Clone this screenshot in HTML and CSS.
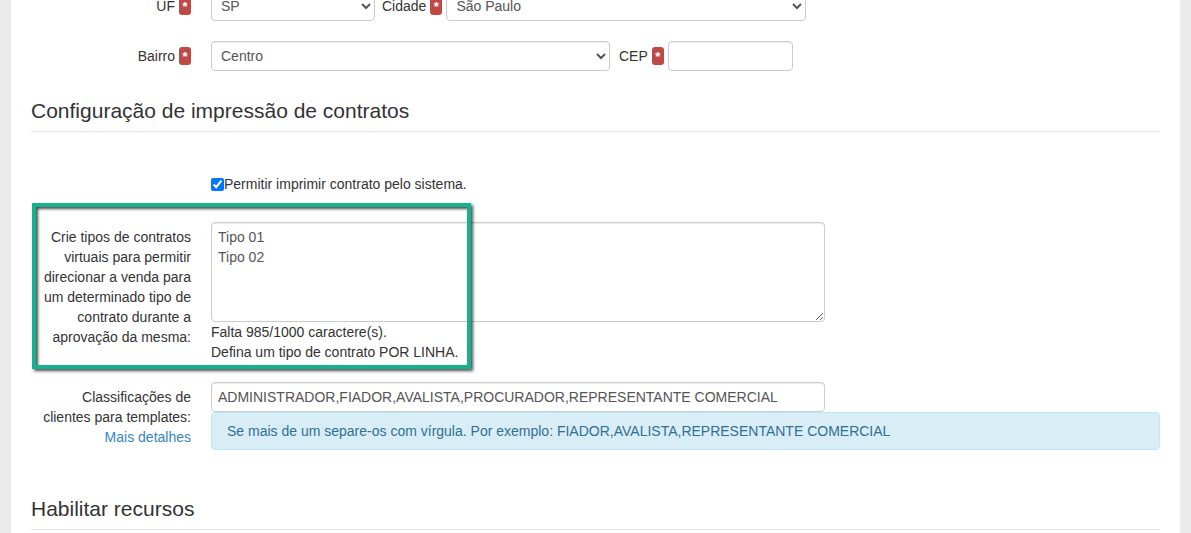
FILE: index.html
```html
<!DOCTYPE html>
<html lang="pt-BR">
<head>
    <meta charset="UTF-8">
    <meta name="viewport" content="width=device-width, initial-scale=1.0">
    <title>Configurações da empresa</title>
    <link rel="stylesheet" href="styles.css">
</head>
<body>
    <div class="page">
        <form class="form">
            <div class="form-group first">
                <label class="control-label with-req">UF <span class="req">*</span></label>
                <div class="controls inline">
                    <select class="form-control uf">
                        <option>SP</option>
                    </select>
                    <span class="inline-label">Cidade <span class="req">*</span></span>
                    <select class="form-control cidade">
                        <option>São Paulo</option>
                    </select>
                </div>
            </div>

            <div class="form-group">
                <label class="control-label with-req">Bairro <span class="req">*</span></label>
                <div class="controls inline">
                    <select class="form-control bairro">
                        <option>Centro</option>
                    </select>
                    <span class="inline-label cep-label">CEP <span class="req">*</span></span>
                    <input type="text" class="form-control cep">
                </div>
            </div>

            <legend class="section-title">Configuração de impressão de contratos</legend>

            <div class="form-group check-row">
                <div></div>
                <label class="checkbox">
                    <input type="checkbox" checked>Permitir imprimir contrato pelo sistema.
                </label>
            </div>

            <div class="form-group tipos-row">
                <label class="control-label">Crie tipos de contratos virtuais para permitir direcionar a venda para um determinado tipo de contrato durante a aprovação da mesma:</label>
                <div class="controls">
                    <textarea class="form-control tipos">Tipo 01
Tipo 02</textarea>
                    <p class="help">Falta 985/1000 caractere(s).<br>Defina um tipo de contrato POR LINHA.</p>
                </div>
                <!-- destaque do tutorial -->
                <div class="highlight"></div>
            </div>

            <div class="form-group class-row">
                <label class="control-label">Classificações de clientes para templates:<br><a href="#" class="more">Mais detalhes</a></label>
                <div class="controls">
                    <input type="text" class="form-control wide" value="ADMINISTRADOR,FIADOR,AVALISTA,PROCURADOR,REPRESENTANTE COMERCIAL">
                    <div class="alert-info">Se mais de um separe-os com vírgula. Por exemplo: FIADOR,AVALISTA,REPRESENTANTE COMERCIAL</div>
                </div>
            </div>

            <legend class="section-title second">Habilitar recursos</legend>
        </form>
    </div>
</body>
</html>
```

FILE: styles.css
```css
html, body {
    margin: 0;
    padding: 0;
}

body {
    font-family: 'Liberation Sans', Arial, sans-serif;
    font-size: 14px;
    line-height: 20px;
    color: #333;
    background-color: #ebebeb;
    overflow: hidden;
}

.page {
    margin: 0 11px;
    padding: 0 20px;
    background-color: #fff;
    min-height: 100vh;
}

.form {
    padding-bottom: 40px;
}

.form-group {
    display: grid;
    grid-template-columns: 160px 1fr;
    column-gap: 20px;
    margin-bottom: 20px;
}

.form-group.first {
    margin-top: -9px;
}

.control-label {
    text-align: right;
    padding-top: 5px;
}

.control-label.with-req {
    display: flex;
    justify-content: flex-end;
    align-items: center;
    gap: 4px;
    height: 30px;
    padding-top: 0;
}

.req {
    display: inline-flex;
    justify-content: center;
    box-sizing: border-box;
    width: 12px;
    height: 18px;
    padding-top: 2px;
    border-radius: 3px;
    background-color: #bd4a47;
    color: #fff;
    font-size: 13px;
    font-weight: bold;
    line-height: 15px;
}

.controls.inline {
    display: flex;
    align-items: center;
}

.inline-label {
    display: flex;
    align-items: center;
    gap: 4px;
    margin: 0 4px 0 7px;
}

.inline-label.cep-label {
    margin-left: 9px;
}

.form-control {
    box-sizing: border-box;
    height: 30px;
    padding: 4px 6px;
    font-family: inherit;
    font-size: 14px;
    line-height: 20px;
    color: #555;
    background-color: #fff;
    border: 1px solid #ccc;
    border-radius: 4px;
    box-shadow: inset 0 1px 1px rgba(0,0,0,0.075);
}

select.form-control {
    padding-left: 5px;
}

.uf { width: 164px; }
.cidade { width: 360px; }
.bairro { width: 399px; }
.cep { width: 125px; }

.section-title {
    display: block;
    width: 100%;
    margin: 25px 0 0;
    padding: 0 0 5px;
    font-size: 21px;
    line-height: 30px;
    color: #333;
    border-bottom: 1px solid #e5e5e5;
}

.section-title.second {
    margin-top: 44px;
}

.check-row {
    margin-top: 42px;
    margin-bottom: 28px;
}

.checkbox {
    display: flex;
    align-items: center;
}

.checkbox input {
    width: 13px;
    height: 13px;
    margin: 0;
}

.tipos-row {
    position: relative;
}

.tipos {
    display: block;
    width: 614px;
    height: 100px;
}

.help {
    margin: 0;
}

.highlight {
    position: absolute;
    left: 1px;
    top: -19px;
    width: 439px;
    height: 166px;
    box-sizing: border-box;
    border: 4px solid #16b18e;
    box-shadow: 2px 2px 3px rgba(0,0,0,0.7), inset 2px 2px 3px rgba(0,0,0,0.7);
    pointer-events: none;
}

.wide {
    display: block;
    width: 614px;
}

.more {
    color: #3585c6;
    text-decoration: none;
}

.alert-info {
    padding: 8px 15px;
    background-color: #d9edf7;
    border: 1px solid #bce8f1;
    border-radius: 4px;
    color: #31708f;
}
```
